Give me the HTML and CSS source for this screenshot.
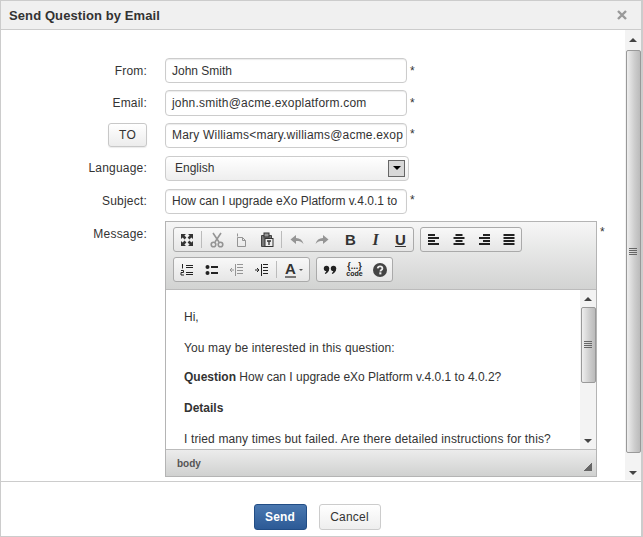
FILE: index.html
```html
<!DOCTYPE html>
<html>

<head>
    <link rel="stylesheet" href="styles.css">
</head>

<body>
    <div class="dialog">
        <div class="dialog-header">
            <span class="dialog-title">Send Question by Email</span>
            <svg class="close-icon" width="10" height="10" viewBox="0 0 10 10">
                <path d="M1 1L9 9M9 1L1 9" stroke="#999" stroke-width="2.4" />
            </svg>
        </div>

        <div class="dialog-body">
            <div class="form">
                <div class="row row-low">
                    <label class="row-label">From:</label>
                    <div class="field">John Smith</div>
                    <span class="star">*</span>
                </div>
                <div class="row row-low row-tall">
                    <label class="row-label">Email:</label>
                    <div class="field field-wide">john.smith@acme.exoplatform.com</div>
                    <span class="star">*</span>
                </div>
                <div class="row row-wide-gap">
                    <div class="row-label to-cell"><span class="to-btn">TO</span></div>
                    <div class="field field-high field-wide">Mary Williams&lt;mary.williams@acme.exop</div>
                    <span class="star">*</span>
                </div>
                <div class="row row-wide-gap">
                    <label class="row-label">Language:</label>
                    <div class="select">
                        <span>English</span>
                        <span class="select-arrow"><i></i></span>
                    </div>
                </div>
                <div class="row">
                    <label class="row-label">Subject:</label>
                    <div class="field field-high">How can I upgrade eXo Platform v.4.0.1 to</div>
                    <span class="star">*</span>
                </div>
                <div class="row row-message">
                    <label class="row-label">Message:</label>
                    <div class="editor">
                        <div class="toolbar">
                            <div class="tool-line">
                                <div class="tool-group">
                                    <span class="tool"><svg width="16" height="16" viewBox="0 0 16 16" fill="#333"><path d="M2 2h5L5.4 3.6 7.4 5.6 5.6 7.4 3.6 5.4 2 7zM14 2v5l-1.6-1.600-2 2-1.800-1.800 2-2L9 2zM2 14V9l1.600 1.600 2-2 1.800 1.800-2 2L7 14zM14 14H9l1.600-1.600-2-2 1.800-1.800 2 2L14 9z" /></svg></span>
                                    <span class="tool-sep"></span>
                                    <span class="tool tool-off"><svg width="16" height="16" viewBox="0 0 16 16" fill="none" stroke="#777" stroke-width="1.600"><path d="M4 1l6 9M12 1L6 10" /><circle cx="4.500" cy="12.500" r="2.300" /><circle cx="11.500" cy="12.500" r="2.300" /></svg></span>
                                    <span class="tool tool-off"><svg width="16" height="16" viewBox="0 0 16 16" fill="none" stroke="#777"><path d="M3.500 1.500v3M3.500 5.500h5l3 3v6h-8zM8.500 5.500v3h3" /></svg></span>
                                    <span class="tool"><svg width="16" height="16" viewBox="0 0 16 16"><path d="M2.500 3.500h10v11h-10z" fill="#777" stroke="#444" /><rect x="5" y="1" width="5" height="4" fill="#999" stroke="#333" /><rect x="6" y="6.500" width="8" height="8" fill="#eee" stroke="#333" /><path d="M8 9h4M10 9v4" stroke="#333" stroke-width="1.300" /></svg></span>
                                    <span class="tool-sep"></span>
                                    <span class="tool tool-off"><svg width="16" height="16" viewBox="0 0 16 16" fill="#777"><path d="M1.500 7.500L7 3v3c4 0 6.500 2 7.500 6-2-2.500-4-3-7.500-3v3z" /></svg></span>
                                    <span class="tool tool-off"><svg width="16" height="16" viewBox="0 0 16 16" fill="#777"><path d="M14.500 7.500L9 3v3c-4 0-6.500 2-7.500 6 2-2.500 4-3 7.500-3v3z" /></svg></span>
                                    <span class="tool-gap"></span>
                                    <span class="tool tool-b">B</span>
                                    <span class="tool tool-i">I</span>
                                    <span class="tool tool-u">U</span>
                                </div>
                                <div class="tool-group">
                                    <span class="tool"><svg width="16" height="16" viewBox="0 0 16 16" stroke="#222" stroke-width="2"><path d="M2 3h7M2 6h11M2 9h7M2 12h11" /></svg></span>
                                    <span class="tool"><svg width="16" height="16" viewBox="0 0 16 16" stroke="#222" stroke-width="2"><path d="M4.500 3h7M2.500 6h11M4.500 9h7M2.500 12h11" /></svg></span>
                                    <span class="tool"><svg width="16" height="16" viewBox="0 0 16 16" stroke="#222" stroke-width="2"><path d="M7 3h7M3 6h11M7 9h7M3 12h11" /></svg></span>
                                    <span class="tool"><svg width="16" height="16" viewBox="0 0 16 16" stroke="#222" stroke-width="2"><path d="M2.500 3h11M2.500 6h11M2.500 9h11M2.500 12h11" /></svg></span>
                                </div>
                            </div>
                            <div class="tool-line">
                                <div class="tool-group">
                                    <span class="tool"><svg width="16" height="16" viewBox="0 0 16 16" fill="none" stroke="#222"><path d="M7 3.500h7M7 5.500h7M7 10.500h7M7 12.500h7" /><path d="M3.500 2v4.500M2 8.500h2.500v2H2v2.500h3" /></svg></span>
                                    <span class="tool"><svg width="16" height="16" viewBox="0 0 16 16" fill="#222"><circle cx="3.500" cy="5" r="2" /><circle cx="3.500" cy="11" r="2" /><rect x="7" y="4" width="7" height="2" /><rect x="7" y="10" width="7" height="2" /></svg></span>
                                    <span class="tool tool-off"><svg width="16" height="16" viewBox="0 0 16 16" fill="none" stroke="#777"><path d="M8 2.500h6M8 5.500h6M8 8.500h6M8 11.500h6M6.500 2v12M5 8H1M3 6L1 8l2 2" /></svg></span>
                                    <span class="tool"><svg width="16" height="16" viewBox="0 0 16 16" fill="none" stroke="#222"><path d="M9 2.500h5M9 5.500h5M9 8.500h5M9 11.500h5M7.500 2v12M1 8h4M3 6l2 2-2 2" /></svg></span>
                                    <span class="tool-sep"></span>
                                    <span class="tool tool-color"><span class="color-a">A</span><i class="color-caret"></i></span>
                                </div>
                                <div class="tool-group">
                                    <span class="tool"><svg width="16" height="16" viewBox="0 0 16 16" fill="#222"><circle cx="4.500" cy="6.500" r="2.700" /><circle cx="11.500" cy="6.500" r="2.700" /><path d="M7.200 6.500c0 3-1.700 4.800-4 5.500l-.4-1c1-.5 1.600-1.500 1.700-3zM14.200 6.500c0 3-1.700 4.800-4 5.500l-.4-1c1-.5 1.600-1.500 1.700-3z" /></svg></span>
                                    <span class="tool tool-code"><span class="code-braces">{...}</span><span class="code-word">code</span></span>
                                    <span class="tool"><svg width="16" height="16" viewBox="0 0 16 16"><circle cx="8" cy="8" r="7" fill="#444" /><path d="M5.700 6.400C5.900 5 7 4.400 8.100 4.400c1.400 0 2.300.9 2.300 2 0 1.600-2 1.700-2 3.100" fill="none" stroke="#eee" stroke-width="1.800" /><rect x="7.300" y="10.300" width="2.100" height="2.100" fill="#eee" /></svg></span>
                                </div>
                            </div>
                        </div>

                        <div class="editor-main">
                            <div class="editor-text">
                                <p>Hi,</p>
                                <p class="line-wide">You may be interested in this question:</p>
                                <p><b>Question</b> How can I upgrade eXo Platform v.4.0.1 to 4.0.2?</p>
                                <p><b>Details</b></p>
                                <p class="line-wide">I tried many times but failed. Are there detailed instructions for this?</p>
                            </div>
                            <div class="scrollbar scrollbar-inner">
                                <span class="arrow-up"></span>
                                <div class="thumb thumb-inner"><span class="grip"></span></div>
                                <div class="scroll-fill"></div>
                                <span class="arrow-down"></span>
                            </div>
                        </div>

                        <div class="editor-foot">
                            <span class="path-label">body</span>
                            <i class="resize-corner"></i>
                        </div>
                    </div>
                    <span class="star">*</span>
                </div>
            </div>

            <div class="scrollbar scrollbar-outer">
                <span class="arrow-up"></span>
                <div class="thumb thumb-outer"><span class="grip"></span></div>
                <span class="arrow-down"></span>
            </div>
        </div>

        <div class="dialog-footer">
            <span class="btn btn-primary">Send</span>
            <span class="btn">Cancel</span>
        </div>
    </div>
</body>

</html>
```

FILE: styles.css
```css
* {
    margin: 0;
    box-sizing: border-box;
}

html,
body {
    height: 100%;
    overflow: hidden;
}

body {
    font-family: "Liberation Sans", Arial, sans-serif;
    font-size: 12px;
    color: #333;
    background: #fff;
}

svg {
    display: block;
}

.dialog {
    display: flex;
    flex-direction: column;
    width: 643px;
    height: 537px;
    border: 1px solid #ccc;
    border-right-width: 2px;
    background: #fff;
}

.dialog-header {
    display: flex;
    align-items: center;
    justify-content: space-between;
    height: 29px;
    padding: 0 14px 0 8px;
    background: #f0f0f0;
    border-bottom: 1px solid #ccc;
}

.dialog-title {
    font-size: 13px;
    font-weight: bold;
    letter-spacing: 0.1px;
    color: #333;
}

.dialog-body {
    display: flex;
    height: 452px;
    border-bottom: 1px solid #ccc;
}

.form {
    flex: 1;
    padding-top: 28px;
}

.row {
    display: flex;
    height: 25px;
    margin-bottom: 7px;
}

.row-tall {
    height: 26px;
}

.row-wide-gap {
    margin-bottom: 8px;
}

.row-message {
    height: 256px;
    margin-bottom: 0;
}

.row-label {
    flex: none;
    width: 146px;
    margin-right: 18px;
    padding-top: 5px;
    letter-spacing: 0.2px;
    text-align: right;
}

.row-low .row-label,
.row-message .row-label {
    padding-top: 6px;
}

.row-low .star {
    padding-top: 6px;
}

.to-cell {
    padding-top: 4px;
}

.to-btn {
    display: inline-block;
    width: 39px;
    height: 24px;
    margin-top: -4px;
    line-height: 22px;
    text-align: center;
    border: 1px solid #c8c8c8;
    border-radius: 3px;
    background: linear-gradient(#fff, #ececec);
    box-shadow: 0 1px 1px rgba(0, 0, 0, 0.08);
}

.field {
    width: 242px;
    height: 100%;
    padding: 0 6px;
    line-height: 24px;
    white-space: nowrap;
    overflow: hidden;
    border: 1px solid #ccc;
    border-radius: 4px;
    background: #fff;
    box-shadow: inset 0 1px 1px rgba(0, 0, 0, 0.08);
}

.field-high {
    line-height: 22px;
}

.field-wide {
    letter-spacing: 0.2px;
}

.star {
    margin-left: 3px;
    padding-top: 4px;
}

.select {
    display: flex;
    align-items: center;
    justify-content: space-between;
    width: 244px;
    height: 100%;
    padding: 0 3px 1px 9px;
    border: 1px solid #ccc;
    border-radius: 4px;
    background: linear-gradient(#fff, #eee);
}

.select-arrow {
    display: flex;
    align-items: center;
    justify-content: center;
    width: 17px;
    height: 17px;
    border: 1px solid #666;
    background: #d8d8d8;
}

.select-arrow i {
    border: 4px solid transparent;
    border-top: 4px solid #000;
    border-bottom: 0;
}

.editor {
    display: flex;
    flex-direction: column;
    width: 432px;
    height: 100%;
    border: 1px solid #b4b4b4;
}

.toolbar {
    height: 68px;
    padding: 5px 0 0 7px;
    border-bottom: 1px solid #bbb;
    background: linear-gradient(#f6f6f6, #d2d3d2);
}

.tool-line {
    display: flex;
    gap: 6px;
    height: 25px;
    margin-bottom: 5px;
}

.tool-group {
    display: flex;
    align-items: center;
    height: 25px;
    border: 1px solid #aaa;
    border-radius: 3px;
    background: linear-gradient(#f8f8f8, #e6e6e6);
}

.tool {
    display: flex;
    align-items: center;
    justify-content: center;
    flex: none;
    width: 25px;
    height: 100%;
}

.tool-off svg {
    opacity: 0.75;
}

.tool-sep {
    width: 5px;
    height: 17px;
    flex: none;
    background: linear-gradient(#bbb, #bbb) center / 1px 100% no-repeat;
}

.tool-gap {
    width: 4px;
    flex: none;
}

.tool-b,
.tool-i,
.tool-u {
    font-size: 15px;
    font-weight: bold;
    color: #333;
}

.tool-i {
    font-family: "Liberation Serif", serif;
    font-style: italic;
    font-size: 16px;
}

.tool-u {
    text-decoration: underline;
}

.tool-color {
    width: 30px;
    gap: 3px;
}

.color-a {
    font-size: 15px;
    font-weight: bold;
    line-height: 14px;
    color: #333;
    border-bottom: 2px solid #777;
}

.color-caret {
    border: 2px solid transparent;
    border-top: 2px solid #555;
    border-bottom: 0;
}

.tool-code {
    flex-direction: column;
    color: #222;
    line-height: 7px;
}

.code-braces {
    font-size: 9px;
    font-weight: bold;
}

.code-word {
    font-size: 7px;
    font-weight: bold;
}

.editor-main {
    display: flex;
    flex: 1;
    min-height: 0;
    border-bottom: 1px solid #bbb;
}

.editor-text {
    flex: 1;
    padding: 20px 0 0 18px;
    overflow: hidden;
    line-height: 15px;
}

.editor-text p {
    margin-bottom: 16px;
}

.editor-text p:nth-child(2) {
    margin-bottom: 14px;
}

.line-wide {
    letter-spacing: 0.13px;
}

.editor-foot {
    display: flex;
    align-items: center;
    justify-content: space-between;
    height: 26px;
    padding: 0 4px 0 11px;
    background: linear-gradient(#ececec, #d0d1d0);
}

.path-label {
    font-size: 10px;
    font-weight: bold;
    color: #555;
}

.resize-corner {
    width: 9px;
    height: 9px;
    margin-top: 7px;
    background: linear-gradient(135deg, transparent 50%, #666 50%);
}

.scrollbar {
    display: flex;
    flex-direction: column;
    align-items: center;
    flex: none;
    background: #f3f3f3;
}

.scrollbar-outer {
    width: 16px;
    height: 450px;
    padding-top: 8px;
}

.scrollbar-inner {
    width: 16px;
    height: 100%;
    padding-top: 7px;
}

.arrow-up {
    flex: none;
    border: 4px solid transparent;
    border-bottom: 4px solid #444;
    border-top: 0;
}

.arrow-down {
    flex: none;
    border: 4px solid transparent;
    border-top: 4px solid #444;
    border-bottom: 0;
}

.thumb {
    display: flex;
    align-items: center;
    justify-content: center;
    flex: none;
    width: 15px;
    border: 1px solid #999;
    border-radius: 2px;
    background: linear-gradient(90deg, #eee, #ccc 60%, #bbb);
}

.thumb-outer {
    height: 403px;
    margin: 8px 0 18px;
}

.thumb-inner {
    height: 76px;
    margin-top: 6px;
}

.scroll-fill {
    flex: 1;
}

.scrollbar-inner .arrow-down {
    margin-bottom: 6px;
}

.grip {
    width: 8px;
    height: 8px;
    background: repeating-linear-gradient(#666 0, #666 1px, transparent 1px, transparent 2px);
}

.dialog-footer {
    display: flex;
    justify-content: center;
    gap: 12px;
    flex: 1;
    padding: 22px 8px 0 0;
}

.btn {
    width: 62px;
    height: 26px;
    line-height: 24px;
    letter-spacing: 0.2px;
    text-align: center;
    border: 1px solid #ccc;
    border-radius: 3px;
    background: linear-gradient(#fff, #eee);
}

.btn-primary {
    width: 53px;
    font-weight: bold;
    color: #fff;
    border-color: #224d85;
    background: linear-gradient(#4a78b0, #2c5a96);
}
```
